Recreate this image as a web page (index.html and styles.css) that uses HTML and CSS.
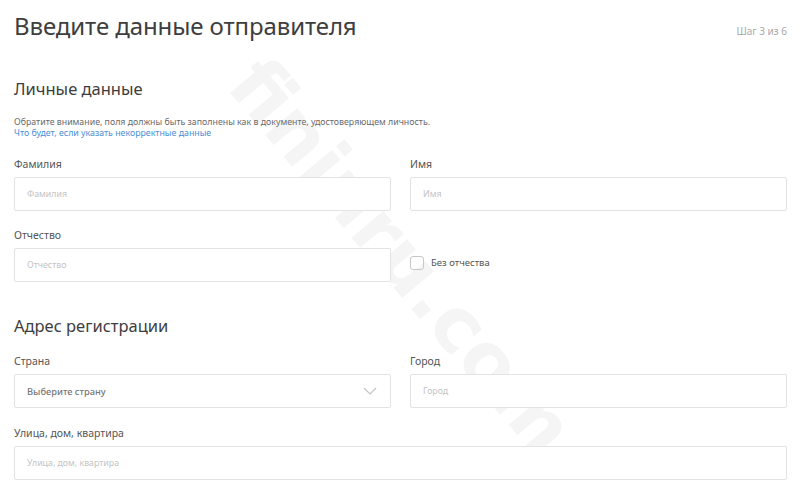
FILE: index.html
```html
<!DOCTYPE html>
<html lang="ru">
<head>
<meta charset="utf-8">
<title>Введите данные отправителя</title>
<link rel="stylesheet" href="styles.css">
</head>
<body>
<div class="page">
  <header class="head">
    <h1 class="title">Введите данные отправителя</h1>
    <span class="step">Шаг 3 из 6</span>
  </header>

  <section class="section">
    <h2 class="subtitle">Личные данные</h2>
    <p class="note">Обратите внимание, поля должны быть заполнены как в документе, удостоверяющем личность.<br><a class="link" href="#">Что будет, если указать некорректные данные</a></p>
    <div class="grid">
      <div class="field">
        <label class="label">Фамилия</label>
        <div class="input"><span class="ph">Фамилия</span></div>
      </div>
      <div class="field">
        <label class="label">Имя</label>
        <div class="input"><span class="ph">Имя</span></div>
      </div>
      <div class="field">
        <label class="label">Отчество</label>
        <div class="input"><span class="ph">Отчество</span></div>
      </div>
      <div class="field check-field">
        <div class="check"><span class="box"></span><span class="check-text">Без отчества</span></div>
      </div>
    </div>
  </section>

  <section class="section addr">
    <h2 class="subtitle">Адрес регистрации</h2>
    <div class="grid">
      <div class="field">
        <label class="label">Страна</label>
        <div class="input select"><span class="ph dark">Выберите страну</span>
          <svg class="chev" width="14" height="8" viewBox="0 0 14 8"><path d="M1 1l6 6 6-6" fill="none" stroke="#c4c4c4" stroke-width="1.2"/></svg>
        </div>
      </div>
      <div class="field">
        <label class="label">Город</label>
        <div class="input"><span class="ph">Город</span></div>
      </div>
      <div class="field wide">
        <label class="label">Улица, дом, квартира</label>
        <div class="input"><span class="ph">Улица, дом, квартира</span></div>
      </div>
    </div>
  </section>
  <div class="watermark">fininru.com</div>
</div>
</body>
</html>
```
FILE: styles.css
```css
html, body {
  margin: 0;
  padding: 0;
  background: #fff;
  overflow: hidden;
}
body {
  font-family: "Noto Sans", "Open Sans", sans-serif;
  color: #4a4a4a;
}
.page {
  position: relative;
  width: 800px;
  height: 494px;
  padding: 0 13px 0 14px;
  box-sizing: border-box;
  overflow: hidden;
}
.head {
  display: flex;
  justify-content: space-between;
  align-items: flex-start;
  padding-top: 9px;
  position: relative;
  z-index: 1;
}
.title {
  margin: 0;
  font-size: 24px;
  font-weight: 400;
  line-height: 34px;
  color: #3e3e3e;
  letter-spacing: -0.1px;
}
.step {
  font-size: 10px;
  color: #a8a8a8;
  margin-top: 15px;
}
.section {
  position: relative;
  z-index: 1;
}
.subtitle {
  margin: 35px 0 0;
  font-size: 16.5px;
  font-weight: 400;
  line-height: 22px;
  color: #3e3e3e;
}
.note {
  margin: 17px 0 0;
  font-size: 8.8px;
  line-height: 11px;
  color: #6a6a6a;
}
.link {
  color: #4a8fd6;
  text-decoration: none;
}
.grid {
  display: grid;
  grid-template-columns: 377px 377px;
  column-gap: 19px;
  row-gap: 17px;
  margin-top: 18px;
}
.field {
  display: flex;
  flex-direction: column;
}
.wide {
  grid-column: 1 / 3;
}
.label {
  font-size: 10.5px;
  line-height: 14px;
  color: #555;
  margin-bottom: 6px;
}
.input {
  height: 34px;
  box-sizing: border-box;
  border: 1px solid #e3e3e3;
  border-radius: 2px;
  display: flex;
  align-items: center;
  justify-content: space-between;
  padding: 0 12px;
  background: #fff;
}
.ph {
  font-size: 8.8px;
  color: #c4c4c4;
}
.ph.dark {
  color: #777;
  font-weight: 500;
  font-size: 9.3px;
}
.chev {
  margin-right: 1px;
}
.check-field {
  justify-content: flex-end;
}
.check {
  display: flex;
  align-items: center;
  height: 34px;
  box-sizing: border-box;
  padding-bottom: 4px;
}
.box {
  width: 12px;
  height: 12px;
  border: 1px solid #c8c8c8;
  border-radius: 3px;
  margin-right: 7px;
}
.check-text {
  font-size: 9.5px;
  color: #555;
  margin-top: -1px;
}
.addr .subtitle {
  margin-top: 33px;
}
.addr .grid {
  margin-top: 17px;
}
.addr .grid .wide {
  margin-top: 1px;
}
.watermark {
  position: absolute;
  left: 132px;
  top: 212px;
  width: 540px;
  text-align: center;
  font-family: "DejaVu Sans", sans-serif;
  font-weight: 700;
  font-size: 76px;
  color: #f5f5f5;
  transform: rotate(50deg);
  z-index: 0;
  white-space: nowrap;
}
```
